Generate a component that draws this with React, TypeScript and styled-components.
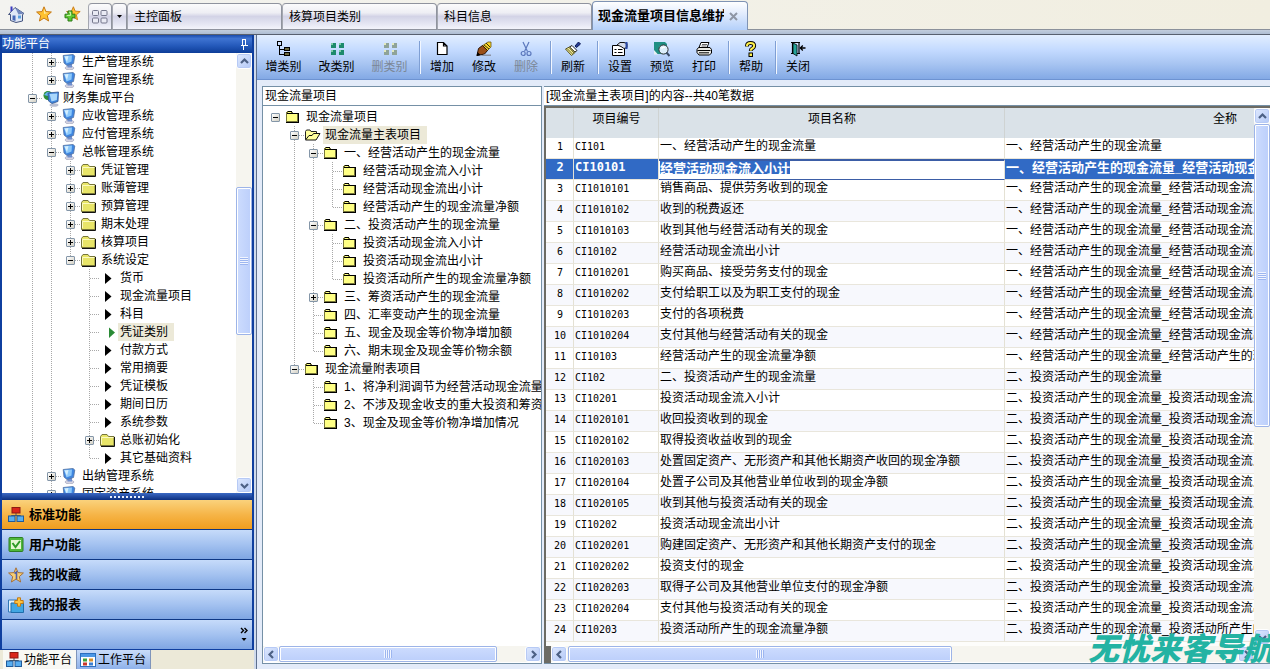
import React from "react";
import styled, { createGlobalStyle, css } from "styled-components";

const sans = `"Liberation Sans", "Noto Sans CJK SC", sans-serif`;
const mono = `"DejaVu Sans Mono", "Noto Sans CJK SC", monospace`;

const GlobalStyle = createGlobalStyle`
  * { box-sizing: border-box; }
  body { margin: 0; font: 12px/18px ${sans}; color: #000; background: #e3ebf9; }
  button, input { font: inherit; color: inherit; padding: 0; margin: 0; border: 0; background: none; }
  ul { list-style: none; margin: 0; padding: 0; }
  svg { display: block; flex: none; }
`;

const Page = styled.div`
  display: flex;
  flex-direction: column;
  height: 100vh;
  min-width: 900px;
  overflow: hidden;
  position: relative;
`;

/* ---------- top strip ---------- */

const TopBar = styled.header`
  display: flex;
  align-items: flex-end;
  flex: none;
  height: 35px;
  padding-bottom: 5px;
  background: linear-gradient(#8b919b, #8b919b) 0 29px / 100% 1px no-repeat,
    linear-gradient(#c3cedd, #aebdd2) 0 30px / 100% 4px no-repeat,
    linear-gradient(#58606e, #58606e) 0 34px / 100% 1px no-repeat,
    linear-gradient(90deg, #f3f3f0, #f1eee0);
`;

const QuickLinks = styled.nav`
  display: flex;
  gap: 12px;
  width: 88px;
  height: 29px;
  padding: 5px 0 0 8px;
  button { display: block; height: 16px; width: 16px; }
`;

const Tab = styled.button<{ $active?: boolean; $width: number }>`
  display: flex;
  align-items: center;
  flex: none;
  width: ${(p) => p.$width}px;
  height: 27px;
  padding: ${(p) => (p.$width > 100 ? "0 6px" : "0")};
  justify-content: ${(p) => (p.$width > 100 ? "flex-start" : "center")};
  border: 1px solid #8f939e;
  border-left-color: #a4a7b0;
  border-radius: 4px 4px 0 0;
  background: linear-gradient(#fbfbfc, #eeeef4 35%, #d3d3e6 50%, #e2e3f1 75%, #f3f4fb);
  white-space: nowrap;
  ${(p) =>
    p.$active &&
    css`
      height: 29px;
      padding: 0 9px 0 5px;
      justify-content: space-between;
      border-color: #7f93b4;
      border-bottom: 0;
      background: linear-gradient(#fff, #dfeafd 45%, #b4d0fa);
      font-size: 13px;
      font-weight: bold;
      span { width: 126px; overflow: hidden; text-align: left; }
    `}
`;

/* ---------- frame ---------- */

const Body = styled.div`
  display: flex;
  flex: 1;
  min-height: 0;
`;

const Sidebar = styled.aside`
  display: flex;
  flex-direction: column;
  flex: none;
  width: 256px;
  padding-right: 2px;
  background: #cfdaec;
`;

const SideFrame = styled.div`
  display: flex;
  flex-direction: column;
  flex: 1;
  min-height: 0;
  border: solid #0f3f9f;
  border-width: 0 2px 1px 2px;
`;

const SideTitle = styled.div`
  display: flex;
  align-items: center;
  justify-content: space-between;
  flex: none;
  height: 18px;
  padding-right: 4px;
  color: #fff;
  background: linear-gradient(#1a4bab, #3f74d2 20%, #2459ba 60%, #0d3d98);
`;

const SideTree = styled.div`
  display: flex;
  flex: 1;
  min-height: 0;
  background: #fff;
`;

const TreeList = styled.ul<{ $indent: number; $top: number }>`
  flex: 1;
  min-width: 0;
  min-height: 0;
  overflow: hidden;
  padding: ${(p) => p.$top}px 0 0 ${(p) => p.$indent}px;
`;

const TreeRow = styled.li`
  display: flex;
  height: 18px;
  white-space: nowrap;
`;

const dotsV = "repeating-linear-gradient(#a8a8a8 0 1px, transparent 1px 2px)";
const dotsH = "repeating-linear-gradient(90deg, #a8a8a8 0 1px, transparent 1px 2px)";

/* line shapes: "|" passes through, "+" branches, "L" ends, " " is empty */
const Guide = styled.span<{ $kind: string }>`
  display: flex;
  align-items: center;
  justify-content: center;
  flex: none;
  width: 19px;
  height: 18px;
  background-repeat: no-repeat;
  ${(p) => p.$kind === "|" && css`background-image: ${dotsV}; background-position: 9px 0; background-size: 1px 18px;`}
  ${(p) =>
    (p.$kind === "+" || p.$kind === "L") &&
    css`
      background-image: ${dotsV}, ${dotsH};
      background-position: 9px 0, 10px 9px;
      background-size: 1px ${p.$kind === "+" ? 18 : 10}px, 9px 1px;
    `}
`;

const Expander = styled.button`
  display: block;
  width: 9px;
  height: 9px;
  border: 1px solid #8496a8;
  border-radius: 1px;
  background: linear-gradient(135deg, #fff, #d3d0c4);
`;

const NodeIcon = styled.span`
  display: flex;
  align-items: center;
  flex: none;
  width: 19px;
  padding-left: 1px;
`;

const NodeLabel = styled.span<{ $selected?: boolean }>`
  padding: 0 6px 0 2px;
  background: ${(p) => (p.$selected ? "#ece9d8" : "none")};
`;

/* ---------- scroll bars ---------- */

const Bar = styled.div<{ $across?: boolean }>`
  display: flex;
  flex: none;
  flex-direction: ${(p) => (p.$across ? "row" : "column")};
  ${(p) => (p.$across ? "height: 16px;" : "width: 16px;")}
  background: #f6f5ef;
`;

const BarButton = styled.button`
  display: flex;
  align-items: center;
  justify-content: center;
  flex: none;
  width: 16px;
  height: 16px;
  border: 1px solid #fff;
  border-radius: 3px;
  background: linear-gradient(135deg, #dfe9fe, #b4c9f7);
  box-shadow: inset 0 0 0 1px #b7caf5;
`;

const Thumb = styled.div<{ $size: number; $across?: boolean }>`
  display: flex;
  align-items: center;
  justify-content: center;
  flex: ${(p) => p.$size} 1 0;
  border: 1px solid #9db4e8;
  outline: 1px solid #fff;
  outline-offset: -2px;
  border-radius: 2px;
  background: linear-gradient(${(p) => (p.$across ? "180deg" : "90deg")}, #cddcfe, #bccffb);
  &::after {
    content: "";
    width: 8px;
    height: 8px;
    background: repeating-linear-gradient(
      ${(p) => (p.$across ? "90deg" : "180deg")}, #f1f5ff 0 1px, #9db6f0 1px 2px);
  }
`;

const Gap = styled.div<{ $size: number }>`
  flex: ${(p) => p.$size} 1 0;
`;

const paths: Record<string, string> = {
  up: "M1 6 L4.5 2.5 L8 6",
  down: "M1 3 L4.5 6.5 L8 3",
  left: "M6 1 L2.5 4.5 L6 8",
  right: "M3 1 L6.5 4.5 L3 8",
};

function ScrollButton({ dir }: { dir: string }) {
  return (
    <BarButton aria-label={dir}>
      <svg width="9" height="9"><path d={paths[dir]} fill="none" stroke="#4d6185" strokeWidth="2.2" /></svg>
    </BarButton>
  );
}

function ScrollBar({ across, before, thumb, after }: { across?: boolean; before: number; thumb: number; after: number }) {
  return (
    <Bar $across={across}>
      <ScrollButton dir={across ? "left" : "up"} />
      <Gap $size={before} />
      <Thumb $size={thumb} $across={across} />
      <Gap $size={after} />
      <ScrollButton dir={across ? "right" : "down"} />
    </Bar>
  );
}

/* ---------- sidebar lower part ---------- */

const Splitter = styled.div`
  display: flex;
  align-items: center;
  justify-content: center;
  flex: none;
  height: 7px;
  background: linear-gradient(#3a69c4, #0c2f80);
  &::after {
    content: "";
    width: 35px;
    height: 2px;
    background: repeating-linear-gradient(90deg, #e8effc 0 2px, transparent 2px 4px);
  }
`;

const NavButton = styled.button<{ $active?: boolean }>`
  display: flex;
  align-items: center;
  gap: 5px;
  flex: none;
  height: 30px;
  padding-left: 6px;
  border-bottom: 1px solid #0d3785;
  font-size: 13px;
  font-weight: bold;
  background: ${(p) =>
    p.$active ? "linear-gradient(#fad27c, #f6b548 50%, #f09d1e)" : "linear-gradient(#c6dbfa, #a4c2f0 50%, #7fa6e3)"};
`;

const NavFooter = styled.div`
  display: flex;
  align-items: center;
  justify-content: flex-end;
  flex: none;
  height: 29px;
  padding-right: 4px;
  background: linear-gradient(#c6dbfa, #a4c2f0 50%, #7fa6e3);
`;

const SideTabs = styled.div`
  display: flex;
  flex: none;
  height: 19px;
  padding-left: 3px;
  background: #ece9d8;
`;

const SideTab = styled.button<{ $active?: boolean }>`
  display: flex;
  align-items: center;
  gap: 2px;
  width: 74px;
  padding-left: 3px;
  white-space: nowrap;
  border-right: 1px solid #7f95bb;
  background: ${(p) => (p.$active ? "#f8f8f4" : "linear-gradient(#c9dcf9, #8fb2ea)")};
`;

/* ---------- main ---------- */

const Main = styled.main`
  display: flex;
  flex-direction: column;
  flex: 1;
  min-width: 0;
  border-left: 1px solid #5d6f8e;
`;

const ToolBar = styled.div`
  display: flex;
  flex: none;
  height: 45px;
  border-bottom: 1px solid #6d93d2;
  background: linear-gradient(#e2eeff, #c3daff 35%, #a8c5f2 65%, #83a9e5);
`;

const ToolButton = styled.button<{ $wide?: boolean; $off?: boolean }>`
  display: flex;
  flex-direction: column;
  align-items: center;
  flex: none;
  gap: 1px;
  width: ${(p) => (p.$wide ? 53 : 42)}px;
  padding-top: 6px;
  color: ${(p) => (p.$off ? "#7b8797" : "#000")};
  white-space: nowrap;
`;

const ToolRule = styled.span`
  flex: none;
  width: 5px;
  height: 33px;
  margin-top: 6px;
  border-right: 1px solid #f2f7ff;
  box-shadow: inset -1px 0 0 #7f9fd4;
`;

const Work = styled.div`
  display: flex;
  flex: 1;
  gap: 2px;
  min-height: 0;
  padding: 6px 0 5px 5px;
`;

const Panel = styled.section<{ $fill?: boolean }>`
  display: flex;
  flex-direction: column;
  min-width: 0;
  ${(p) => (p.$fill ? "flex: 1;" : "flex: none; width: 280px; padding-bottom: 1px;")}
  border: 1px solid #7590a6;
  ${(p) => p.$fill && "border-right: 0; border-left: 0;"}
  background: #fff;
`;

const PanelTitle = styled.div`
  flex: none;
  height: 19px;
  padding-left: 2px;
  border-bottom: 1px solid #7590a6;
`;

const GridFrame = styled.div`
  display: flex;
  flex: 1;
  min-height: 0;
  border: solid #6c6b64;
  border-width: 2px 0 0 2px;
`;

const GridBody = styled.div`
  display: flex;
  flex-direction: column;
  flex: 1;
  min-width: 0;
`;

const GridView = styled.div`
  flex: 1;
  min-height: 0;
  overflow: hidden;
  background: #fdfdfb;
`;

const GridFoot = styled.div`
  display: flex;
  flex: none;
  padding-bottom: 1px;
  border-left: 5px solid #6c6b64;
  & > div { flex: 1; }
`;

const Corner = styled.div`
  display: flex;
  flex-direction: column;
  padding-bottom: 18px;
  background: #f6f5ef;
  & > div { flex: 1; }
`;

const Table = styled.table`
  width: 899px;
  table-layout: fixed;
  border-collapse: separate;
  border-spacing: 0;
  line-height: 17px;
  th, td {
    padding: 0 0 0 1px;
    overflow: hidden;
    white-space: nowrap;
    vertical-align: top;
    text-align: left;
    border-right: 1px solid #e4e1d4;
  }
  th {
    height: 30px;
    font-weight: normal;
    text-align: center;
    line-height: 22px;
    background: #dae2e8;
    border-right-color: #cfd3d2;
  }
  td { height: 21px; border-bottom: 1px solid #e9e6dc; }
`;

const Row = styled.tr<{ $picked?: boolean }>`
  background: #fff;
  &:nth-child(even) { background: #f7f8fd; }
  ${(p) =>
    p.$picked &&
    css`
      && { background: #316ac5; color: #fff; font-weight: bold; font-size: 13px; }
    `}
`;

const CodeCell = styled.td<{ $centre?: boolean; $picked?: boolean }>`
  && {
    font-family: ${mono};
    font-size: ${(p) => (p.$picked ? 12 : 10)}px;
    text-align: ${(p) => (p.$centre ? "center" : "left")};
  }
`;

const EditCell = styled.td`
  && {
    background: #fff;
    border-top: 2px solid #3b5da6;
    border-bottom: 1px solid #3b5da6;
    line-height: 13px;
  }
`;

const EditBox = styled.input`
  display: block;
  field-sizing: content;
  height: 13px;
  line-height: 13px;
  outline: 0;
  color: #fff;
  background: #316ac5;
`;

const Stamp = styled.div`
  position: absolute;
  right: -4px;
  bottom: 4px;
  font: italic 900 31px/36px "Noto Sans CJK SC", sans-serif;
  color: #23b3a3;
  white-space: nowrap;
  pointer-events: none;
`;

/* ---------- drawings ---------- */

const HomeIcon = () => (
  <svg width="17" height="17" viewBox="0 0 17 17">
    <path d="M0.5 8.5 L7 1.5 L16 7.5 L14.500 8.500 V15 L8 16.500 L2.500 14.500 V8.500Z" fill="#dfe7f6" stroke="#46557f" />
    <path d="M7 1.5 L16 7.5 L10.5 8.5Z" fill="#7288bd" />
    <path d="M2.5 0.5 H4.5 V4.5 L2.5 6Z" fill="#3a3ac0" />
    <path d="M4.5 9.5h3v5.5l-3-1z" fill="#4668b8" />
    <path d="M10 9.5h3v3h-3z" fill="#5ca0dd" />
  </svg>
);

const starPath = "M8 0.8 L10 5.6 L15.4 6 L11.3 9.6 L12.6 15 L8 12.1 L3.4 15 L4.7 9.6 L0.6 6 L6 5.6Z";

const StarIcon = () => (
  <svg width="16" height="16" viewBox="0 0 16 16">
    <path d={starPath} fill="#ffc12e" stroke="#c77a18" />
    <path d="M8 2.8 L9.4 6.4 L12.5 6.8 L8 8Z" fill="#ffe89a" />
  </svg>
);

const StarAddIcon = () => (
  <svg width="17" height="16" viewBox="0 0 17 16">
    <g transform="translate(2 0) scale(.92)"><path d={starPath} fill="#ffc12e" stroke="#c77a18" /></g>
    <path d="M4 5h4v3.2h3v3.6h-3v3.2h-4v-3.2h-3v-3.6h3z" fill="#5ec932" stroke="#2b7b16" />
    <path d="M5 6.2h1.6v3.2h-3.8" stroke="#d3f5b4" fill="none" />
  </svg>
);

const TilesIcon = () => (
  <svg width="16" height="14" viewBox="0 0 16 14" fill="#e9eaf4" stroke="#74778c">
    {[0.5, 9].map((x) => [0.5, 8].map((y) => <rect key={`${x}${y}`} x={x} y={y} width="6" height="5" rx="1" />))}
  </svg>
);

const Triangle = () => (
  <svg width="5" height="3"><path d="M0 0h5l-2.5 3z" fill="#000" /></svg>
);

const PinIcon = () => (
  <svg width="8" height="11" viewBox="0 0 8 11" fill="none" stroke="#fff" shapeRendering="crispEdges">
    <path d="M2.5 6V0.5h3V6M5 0v6M0.5 6.5h7M3.5 7v4" />
  </svg>
);

const Computer = () => (
  <svg width="14" height="16" viewBox="0 0 14 16">
    <ellipse cx="7.500" cy="14" rx="4.500" ry="1.800" fill="#d5d4e2" stroke="#9ba0b8" strokeWidth=".6" />
    <path d="M5.500 9.500h4.500v4h-4.500z" fill="#6f8fce" />
    <path d="M1.2 1.500 L11 0.5 L12.800 2 L11.500 9.500 L5 11.500 L2 9Z" fill="#3f86e0" stroke="#54719f" strokeWidth=".8" />
    <path d="M2 2 L10 1.500 L9.500 7.600 L4.500 9.500Z" fill="#8cc8fa" />
    <path d="M2.500 2.500l4-.5-1.500 6z" fill="#d5effe" />
  </svg>
);

const Network = () => (
  <svg width="16" height="17" viewBox="0 0 16 17">
    <circle cx="5" cy="5.5" r="4.5" fill="#2d8f3c" />
    <path d="M1 5q3-4 6-3l-2 4z" fill="#63b5f0" />
    <ellipse cx="11" cy="15" rx="4.5" ry="1.8" fill="#b9bfd2" />
    <path d="M5 3 L15.500 2 L15 11.5 L9 13.5 L5.5 11Z" fill="#3f86dc" stroke="#33558f" strokeWidth=".8" />
    <path d="M6.500 4 L14.300 3.500 L13.8 10 L8.5 11.5Z" fill="#a9d7fb" />
  </svg>
);

const FolderDark = () => (
  <svg width="16" height="13" viewBox="0 0 16 13">
    <path d="M0.5 11.5V2.5L2 .5h5l1.5 2h5.5v9z" fill="#e8e568" stroke="#77763a" />
    <path d="M14.5 3v9.5H1" stroke="#111" fill="none" />
    <path d="M1.5 10V3.5h12" stroke="#fbfac0" fill="none" />
  </svg>
);

const Folder = () => (
  <svg width="13" height="12" viewBox="0 0 13 12" shapeRendering="crispEdges">
    <path d="M0.5 10.5V2.5l1-2h4l1 2h5v8z" fill="#ffff84" stroke="#77763a" />
    <path d="M12.5 2v9.5H0M1 2.5h11M1.500 0.500h4" stroke="#000" fill="none" />
  </svg>
);

const FolderOpen = () => (
  <svg width="16" height="12" viewBox="0 0 16 12">
    <path d="M0.5 10.5v-8l1-1.500h3.500l1 1.500h5.500v2.500" fill="#ffff9c" stroke="#222" />
    <path d="M0.500 11l3.500-4.500h3l1.500-2h6.500l-4 6.500z" fill="#ffff9c" stroke="#111" />
  </svg>
);

const Arrow = ({ green }: { green?: boolean }) => (
  <svg width="16" height="11" viewBox="0 0 16 11">
    <path d={green ? "M9 0.500l6 5-6 5.500z" : "M5 0l6.500 5.500-6.500 5.500z"} fill={green ? "#2a8a35" : "#000"} />
  </svg>
);

const OrgIcon = () => (
  <svg width="16" height="15" viewBox="0 0 16 15">
    <path d="M8 6v3M3.500 11V8.500h9V11" stroke="#555" fill="none" />
    <rect x="4" y=".5" width="8" height="5.500" fill="#d9261a" stroke="#8d1b12" />
    <rect x=".5" y="9" width="6.500" height="5.500" fill="#58aef0" stroke="#215b9a" />
    <rect x="9" y="9" width="6.500" height="5.500" fill="#58aef0" stroke="#215b9a" />
  </svg>
);

const CheckIcon = () => (
  <svg width="16" height="15" viewBox="0 0 16 15">
    <rect x="1" y=".5" width="14" height="14" rx="1" fill="#4fb83a" stroke="#2c7d25" />
    <rect x="3" y="3" width="10" height="9" fill="#e4f6d2" />
    <path d="M4.500 6l3 4 4.500-6" stroke="#2f9a27" strokeWidth="2" fill="none" />
  </svg>
);

const FavIcon = () => (
  <svg width="16" height="16" viewBox="0 0 16 16">
    <path d={starPath} fill="#f8cf72" stroke="#a6713a" />
    <path d="M6.500 6.500l2-1.500v7" stroke="#4d5fa8" strokeWidth="1.600" fill="none" />
  </svg>
);

const ReportIcon = () => (
  <svg width="16" height="16" viewBox="0 0 16 16">
    <path d="M.5 3h9v12h-9z" fill="#e2f2fd" stroke="#3177b6" />
    <path d="M3 6h12.500v9.500h-12.500z" fill="#41a6e2" stroke="#1f6dab" />
    <path d="M9.500 .8h3v2.700h2.700v3h-2.700v2.700h-3v-2.700h-2.700v-3h2.700z" fill="#ffc23b" stroke="#c07a17" />
  </svg>
);

const PanesIcon = () => (
  <svg width="16" height="14" viewBox="0 0 16 14">
    <rect x=".5" y=".5" width="15" height="13" fill="#fff" stroke="#2b6fc0" />
    <path d="M1 1h14v3h-14z" fill="#4b97e6" />
    <path d="M3 5.500h4v3h-4z" fill="#3fa33b" /><path d="M9 5.500h4v3h-4z" fill="#d9902b" />
    <path d="M3 9.500h4v3h-4z" fill="#c8372a" /><path d="M9 9.500h4v3h-4z" fill="#3c7fd0" />
  </svg>
);

const MoreIcon = () => (
  <svg width="8" height="15" viewBox="0 0 8 15">
    <path d="M1 1l2.500 2.500L1 6M4.500 1L7 3.500 4.500 6" stroke="#000" strokeWidth="1.400" fill="none" />
    <path d="M1.500 11h5l-2.500 3z" />
  </svg>
);

const typeSquares = (base: string, light: string) =>
  [2, 10].map((x) => [2, 9].map((y) => (
    <g key={`${x}-${y}`}>
      <rect x={x} y={y} width="5" height="5" fill={base} />
      <rect x={x} y={y} width="2" height="2" fill={light} />
    </g>
  )));

const toolIcons: Record<string, React.ReactNode> = {
  addType: (
    <g shapeRendering="crispEdges">
      <path d="M1.500 0.500h4v4h-4zM3.500 5v9M4 8.500h4M4 13.500h4" fill="none" stroke="#000" />
      <path d="M8.500 6.500h5v3h-5zM8.500 11.500h5v3h-5z" fill="#6d6a40" stroke="#000" />
    </g>
  ),
  editType: typeSquares("#1d8a6c", "#7ccba6"),
  dropType: typeSquares("#8fa398", "#e2e9bd"),
  add: <path d="M3.500 1.500h6l3.500 3.500v8.500h-9.500zM9.500 1.500v3.500h3.500" fill="#fff" stroke="#000" strokeWidth="1.200" />,
  edit: (
    <>
      <path d="M6 5l6-4h3v5l-5 5z" fill="#f7d52a" stroke="#6b5510" strokeWidth=".8" />
      <path d="M8 4l5 4M10 2l4 4" stroke="#3c300a" />
      <path d="M1 14.500l1.500-7L6.500 4.500l5 5-3 3.500z" fill="#9a4f18" stroke="#2a1405" />
      <path d="M0.500 15l1-4 3 3z" />
      <path d="M8 13.500h7v1.500h-11z" fill="#8c93a5" />
    </>
  ),
  cut: (
    <g fill="none" stroke="#5c78bd" strokeWidth="1.200">
      <path d="M5 1l4.500 9.500M11 1l-4.500 9.500" /><circle cx="5.200" cy="12.500" r="2" /><circle cx="11" cy="12.500" r="2" />
    </g>
  ),
  brush: (
    <>
      <path d="M10 5l3.500-4 2 2-4 3.500z" fill="#233a94" stroke="#0d1b55" />
      <path d="M7 4.500l5 5-2 1.500-5.500-5z" fill="#fff" stroke="#222" />
      <path d="M4.500 6l5.500 5.500-3.500 3-6-6.500z" fill="#f3ee9a" stroke="#55511c" />
      <path d="M2.500 8l5 5M4.500 7l4.500 5" stroke="#6b6628" />
    </>
  ),
  setup: (
    <>
      <path d="M.5 4.500h12v10h-12z" fill="#fff" stroke="#000" />
      <path d="M2.500 8.500h2M6 8.500h4.500M2.500 11.500h2M6 11.500h4.500" stroke="#000" />
      <path d="M5 4l3-2.500h4l3 1v4l-3 1-3-2z" fill="#d7deec" stroke="#111" />
      <path d="M13.500 1h2v7h-2z" fill="#2848a8" />
    </>
  ),
  preview: (
    <>
      <path d="M0 1h11l2 2v10h-13z" fill="#1f8f83" />
      <path d="M0 9l4 4.500h-4z" fill="#e8f0f4" />
      <circle cx="9.500" cy="8.500" r="4.600" fill="#dceefa" stroke="#333" />
      <path d="M7.500 7.500q1.500-2 3.500-1" stroke="#fff" strokeWidth="1.500" fill="none" />
      <path d="M12.500 11.500l3 3.500" stroke="#3a4a66" strokeWidth="2" />
    </>
  ),
  print: (
    <>
      <path d="M5 1.500h8l-2 5h-8z" fill="#fff" stroke="#000" />
      <path d="M6 3.500h5M5.500 5h5" stroke="#666" />
      <path d="M2.500 6.500h11.500l1.500 2v3.500l-2 2h-10.500l-2-2.500v-3z" fill="#e9e9e4" stroke="#000" />
      <path d="M1.500 9.500h13M3 11.800h10" stroke="#000" />
    </>
  ),
  help: (
    <>
      <path d="M4 5.500v-1q0-2.500 3.500-2.500t3.700 2.500q0 2-2 3-1.500.8-1.500 2.500" fill="none" stroke="#000" strokeWidth="3.800" />
      <path d="M4 5.300v-.8q0-2.500 3.500-2.500t3.700 2.500q0 2-2 3-1.500.8-1.500 2.300" fill="none" stroke="#fff04a" strokeWidth="2" />
      <rect x="6" y="12" width="3.500" height="3.500" fill="#fff04a" stroke="#000" />
    </>
  ),
  close: (
    <>
      <path d="M1 1.500h9M1 12.500h9M2.500 1.500v11M9 1.500v11" stroke="#000" strokeWidth="1.200" fill="none" />
      <path d="M3 2l4 2v11l-4-2.500z" fill="#24a49a" stroke="#000" strokeWidth=".8" />
      <path d="M10 7h5.500M12.800 4.500l-2.500 2.500 2.500 2.500" stroke="#000" strokeWidth="1.300" fill="none" />
    </>
  ),
};

/* ---------- data ---------- */

type Node = { g: string; box?: "+" | "-"; icon: React.ReactNode; text: string; sel?: boolean };

const pc = <Computer />;
const fd = <FolderDark />;
const go = <Arrow />;
const f = <Folder />;

const sideNodes: Node[] = [
  { g: "|+", box: "+", icon: pc, text: "生产管理系统" },
  { g: "|L", box: "+", icon: pc, text: "车间管理系统" },
  { g: "+", box: "-", icon: <Network />, text: "财务集成平台" },
  { g: "|+", box: "+", icon: pc, text: "应收管理系统" },
  { g: "|+", box: "+", icon: pc, text: "应付管理系统" },
  { g: "|+", box: "-", icon: pc, text: "总帐管理系统" },
  { g: "||+", box: "+", icon: fd, text: "凭证管理" },
  { g: "||+", box: "+", icon: fd, text: "账薄管理" },
  { g: "||+", box: "+", icon: fd, text: "预算管理" },
  { g: "||+", box: "+", icon: fd, text: "期末处理" },
  { g: "||+", box: "+", icon: fd, text: "核算项目" },
  { g: "||L", box: "-", icon: fd, text: "系统设定" },
  { g: "|| +", icon: go, text: "货币" },
  { g: "|| +", icon: go, text: "现金流量项目" },
  { g: "|| +", icon: go, text: "科目" },
  { g: "|| +", icon: <Arrow green />, text: "凭证类别", sel: true },
  { g: "|| +", icon: go, text: "付款方式" },
  { g: "|| +", icon: go, text: "常用摘要" },
  { g: "|| +", icon: go, text: "凭证模板" },
  { g: "|| +", icon: go, text: "期间日历" },
  { g: "|| +", icon: go, text: "系统参数" },
  { g: "|| +", box: "+", icon: fd, text: "总账初始化" },
  { g: "|| L", icon: go, text: "其它基础资料" },
  { g: "|+", box: "+", icon: pc, text: "出纳管理系统" },
  { g: "|+", box: "+", icon: pc, text: "固定资产系统" },
];

const itemNodes: Node[] = [
  { g: " ", box: "-", icon: f, text: "现金流量项目" },
  { g: " +", box: "-", icon: <FolderOpen />, text: "现金流量主表项目", sel: true },
  { g: " |+", box: "-", icon: f, text: "一、经营活动产生的现金流量" },
  { g: " ||+", icon: f, text: "经营活动现金流入小计" },
  { g: " ||+", icon: f, text: "经营活动现金流出小计" },
  { g: " ||L", icon: f, text: "经营活动产生的现金流量净额" },
  { g: " |+", box: "-", icon: f, text: "二、投资活动产生的现金流量" },
  { g: " ||+", icon: f, text: "投资活动现金流入小计" },
  { g: " ||+", icon: f, text: "投资活动现金流出小计" },
  { g: " ||L", icon: f, text: "投资活动所产生的现金流量净额" },
  { g: " |+", box: "+", icon: f, text: "三、筹资活动产生的现金流量" },
  { g: " |+", icon: f, text: "四、汇率变动产生的现金流量" },
  { g: " |+", icon: f, text: "五、现金及现金等价物净增加额" },
  { g: " |L", icon: f, text: "六、期末现金及现金等价物余额" },
  { g: " L", box: "-", icon: f, text: "现金流量附表项目" },
  { g: "  +", icon: f, text: "1、将净利润调节为经营活动现金流量" },
  { g: "  +", icon: f, text: "2、不涉及现金收支的重大投资和筹资" },
  { g: "  L", icon: f, text: "3、现金及现金等价物净增加情况" },
];

const A = "一、经营活动产生的现金流量";
const B = "二、投资活动产生的现金流量";
const rows: [string, string, string][] = [
  ["CI101", A, A],
  ["CI10101", "经营活动现金流入小计", `${A}_经营活动现金流入小计`],
  ["CI1010101", "销售商品、提供劳务收到的现金", `${A}_经营活动现金流入小计`],
  ["CI1010102", "收到的税费返还", `${A}_经营活动现金流入小计`],
  ["CI1010103", "收到其他与经营活动有关的现金", `${A}_经营活动现金流入小计`],
  ["CI10102", "经营活动现金流出小计", `${A}_经营活动现金流出小计`],
  ["CI1010201", "购买商品、接受劳务支付的现金", `${A}_经营活动现金流出小计`],
  ["CI1010202", "支付给职工以及为职工支付的现金", `${A}_经营活动现金流出小计`],
  ["CI1010203", "支付的各项税费", `${A}_经营活动现金流出小计`],
  ["CI1010204", "支付其他与经营活动有关的现金", `${A}_经营活动现金流出小计`],
  ["CI10103", "经营活动产生的现金流量净额", `${A}_经营活动产生的现金流量净额`],
  ["CI102", B, B],
  ["CI10201", "投资活动现金流入小计", `${B}_投资活动现金流入小计`],
  ["CI1020101", "收回投资收到的现金", `${B}_投资活动现金流入小计`],
  ["CI1020102", "取得投资收益收到的现金", `${B}_投资活动现金流入小计`],
  ["CI1020103", "处置固定资产、无形资产和其他长期资产收回的现金净额", `${B}_投资活动现金流入小计`],
  ["CI1020104", "处置子公司及其他营业单位收到的现金净额", `${B}_投资活动现金流入小计`],
  ["CI1020105", "收到其他与投资活动有关的现金", `${B}_投资活动现金流入小计`],
  ["CI10202", "投资活动现金流出小计", `${B}_投资活动现金流出小计`],
  ["CI1020201", "购建固定资产、无形资产和其他长期资产支付的现金", `${B}_投资活动现金流出小计`],
  ["CI1020202", "投资支付的现金", `${B}_投资活动现金流出小计`],
  ["CI1020203", "取得子公司及其他营业单位支付的现金净额", `${B}_投资活动现金流出小计`],
  ["CI1020204", "支付其他与投资活动有关的现金", `${B}_投资活动现金流出小计`],
  ["CI10203", "投资活动所产生的现金流量净额", `${B}_投资活动所产生的现金流量净额`],
];

const tools: ([string, string, boolean?] | null)[] = [
  ["addType", "增类别"], ["editType", "改类别"], ["dropType", "删类别", true], null,
  ["add", "增加"], ["edit", "修改"], ["cut", "删除", true], null,
  ["brush", "刷新"], null,
  ["setup", "设置"], ["preview", "预览"], ["print", "打印"], null,
  ["help", "帮助"], null,
  ["close", "关闭"],
];

function Tree({ nodes, indent, top }: { nodes: Node[]; indent: number; top: number }) {
  return (
    <TreeList $indent={indent} $top={top}>
      {nodes.map((n) => (
        <TreeRow key={n.text}>
          {n.g.split("").map((k, i) => (
            <Guide key={i} $kind={k}>
              {n.box && i === n.g.length - 1 && (
                <Expander aria-label={n.text}>
                  <svg width="7" height="7" shapeRendering="crispEdges">
                    <path d={n.box === "+" ? "M1 3.5h5M3.5 1v5" : "M1 3.5h5"} stroke="#000" />
                  </svg>
                </Expander>
              )}
            </Guide>
          ))}
          <NodeIcon>{n.icon}</NodeIcon>
          <NodeLabel $selected={n.sel}>{n.text}</NodeLabel>
        </TreeRow>
      ))}
    </TreeList>
  );
}

export default function App() {
  return (
    <Page>
      <GlobalStyle />
      <TopBar>
        <QuickLinks>
          <button aria-label="主页"><HomeIcon /></button>
          <button aria-label="收藏"><StarIcon /></button>
          <button aria-label="添加收藏"><StarAddIcon /></button>
        </QuickLinks>
        <Tab $width={24} aria-label="窗口"><TilesIcon /></Tab>
        <Tab $width={15} aria-label="列表"><Triangle /></Tab>
        <Tab $width={155}>主控面板</Tab>
        <Tab $width={155}>核算项目类别</Tab>
        <Tab $width={155}>科目信息</Tab>
        <Tab $width={156} $active>
          <span>现金流量项目信息维护</span>
          <svg width="9" height="9"><path d="M1 1l7 7M8 1l-7 7" stroke="#8e96a5" strokeWidth="2" /></svg>
        </Tab>
      </TopBar>
      <Body>
        <Sidebar>
          <SideFrame>
            <SideTitle>功能平台<PinIcon /></SideTitle>
            <SideTree>
              <Tree nodes={sideNodes} indent={21} top={0} />
              <ScrollBar before={118} thumb={146} after={142} />
            </SideTree>
            <Splitter />
            <NavButton $active><OrgIcon />标准功能</NavButton>
            <NavButton><CheckIcon />用户功能</NavButton>
            <NavButton><FavIcon />我的收藏</NavButton>
            <NavButton><ReportIcon />我的报表</NavButton>
            <NavFooter><button aria-label="更多"><MoreIcon /></button></NavFooter>
          </SideFrame>
          <SideTabs>
            <SideTab $active><OrgIcon />功能平台</SideTab>
            <SideTab><PanesIcon />工作平台</SideTab>
          </SideTabs>
        </Sidebar>
        <Main>
          <ToolBar>
            {tools.map((t, i) =>
              t ? (
                <ToolButton key={i} $wide={t[1].length > 2} $off={t[2]}>
                  <svg width="16" height="16" viewBox="0 0 16 16">{toolIcons[t[0]]}</svg>
                  {t[1]}
                </ToolButton>
              ) : (
                <ToolRule key={i} />
              )
            )}
          </ToolBar>
          <Work>
            <Panel>
              <PanelTitle>现金流量项目</PanelTitle>
              <Tree nodes={itemNodes} indent={3} top={2} />
              <ScrollBar across before={0} thumb={215} after={28} />
            </Panel>
            <Panel $fill>
              <PanelTitle>[现金流量主表项目]的内容--共40笔数据</PanelTitle>
              <GridFrame>
                <GridBody>
                  <GridView>
                    <Table>
                      <colgroup>
                        <col width="28" /><col width="85" /><col width="346" /><col width="440" />
                      </colgroup>
                      <thead>
                        <tr><th /><th>项目编号</th><th>项目名称</th><th>全称</th></tr>
                      </thead>
                      <tbody>
                        {rows.map(([code, name, full], i) => {
                          const picked = i === 1;
                          return (
                            <Row key={code} $picked={picked}>
                              <CodeCell $centre $picked={picked}>{i + 1}</CodeCell>
                              <CodeCell $picked={picked}>{code}</CodeCell>
                              {picked ? (
                                <EditCell><EditBox aria-label="项目名称" defaultValue={name} /></EditCell>
                              ) : (
                                <td>{name}</td>
                              )}
                              <td>{full}</td>
                            </Row>
                          );
                        })}
                      </tbody>
                    </Table>
                  </GridView>
                  <GridFoot><ScrollBar across before={1} thumb={383} after={287} /></GridFoot>
                </GridBody>
                <Corner><ScrollBar before={0} thumb={302} after={202} /></Corner>
              </GridFrame>
            </Panel>
          </Work>
        </Main>
      </Body>
      <Stamp>无忧来客导航</Stamp>
    </Page>
  );
}
